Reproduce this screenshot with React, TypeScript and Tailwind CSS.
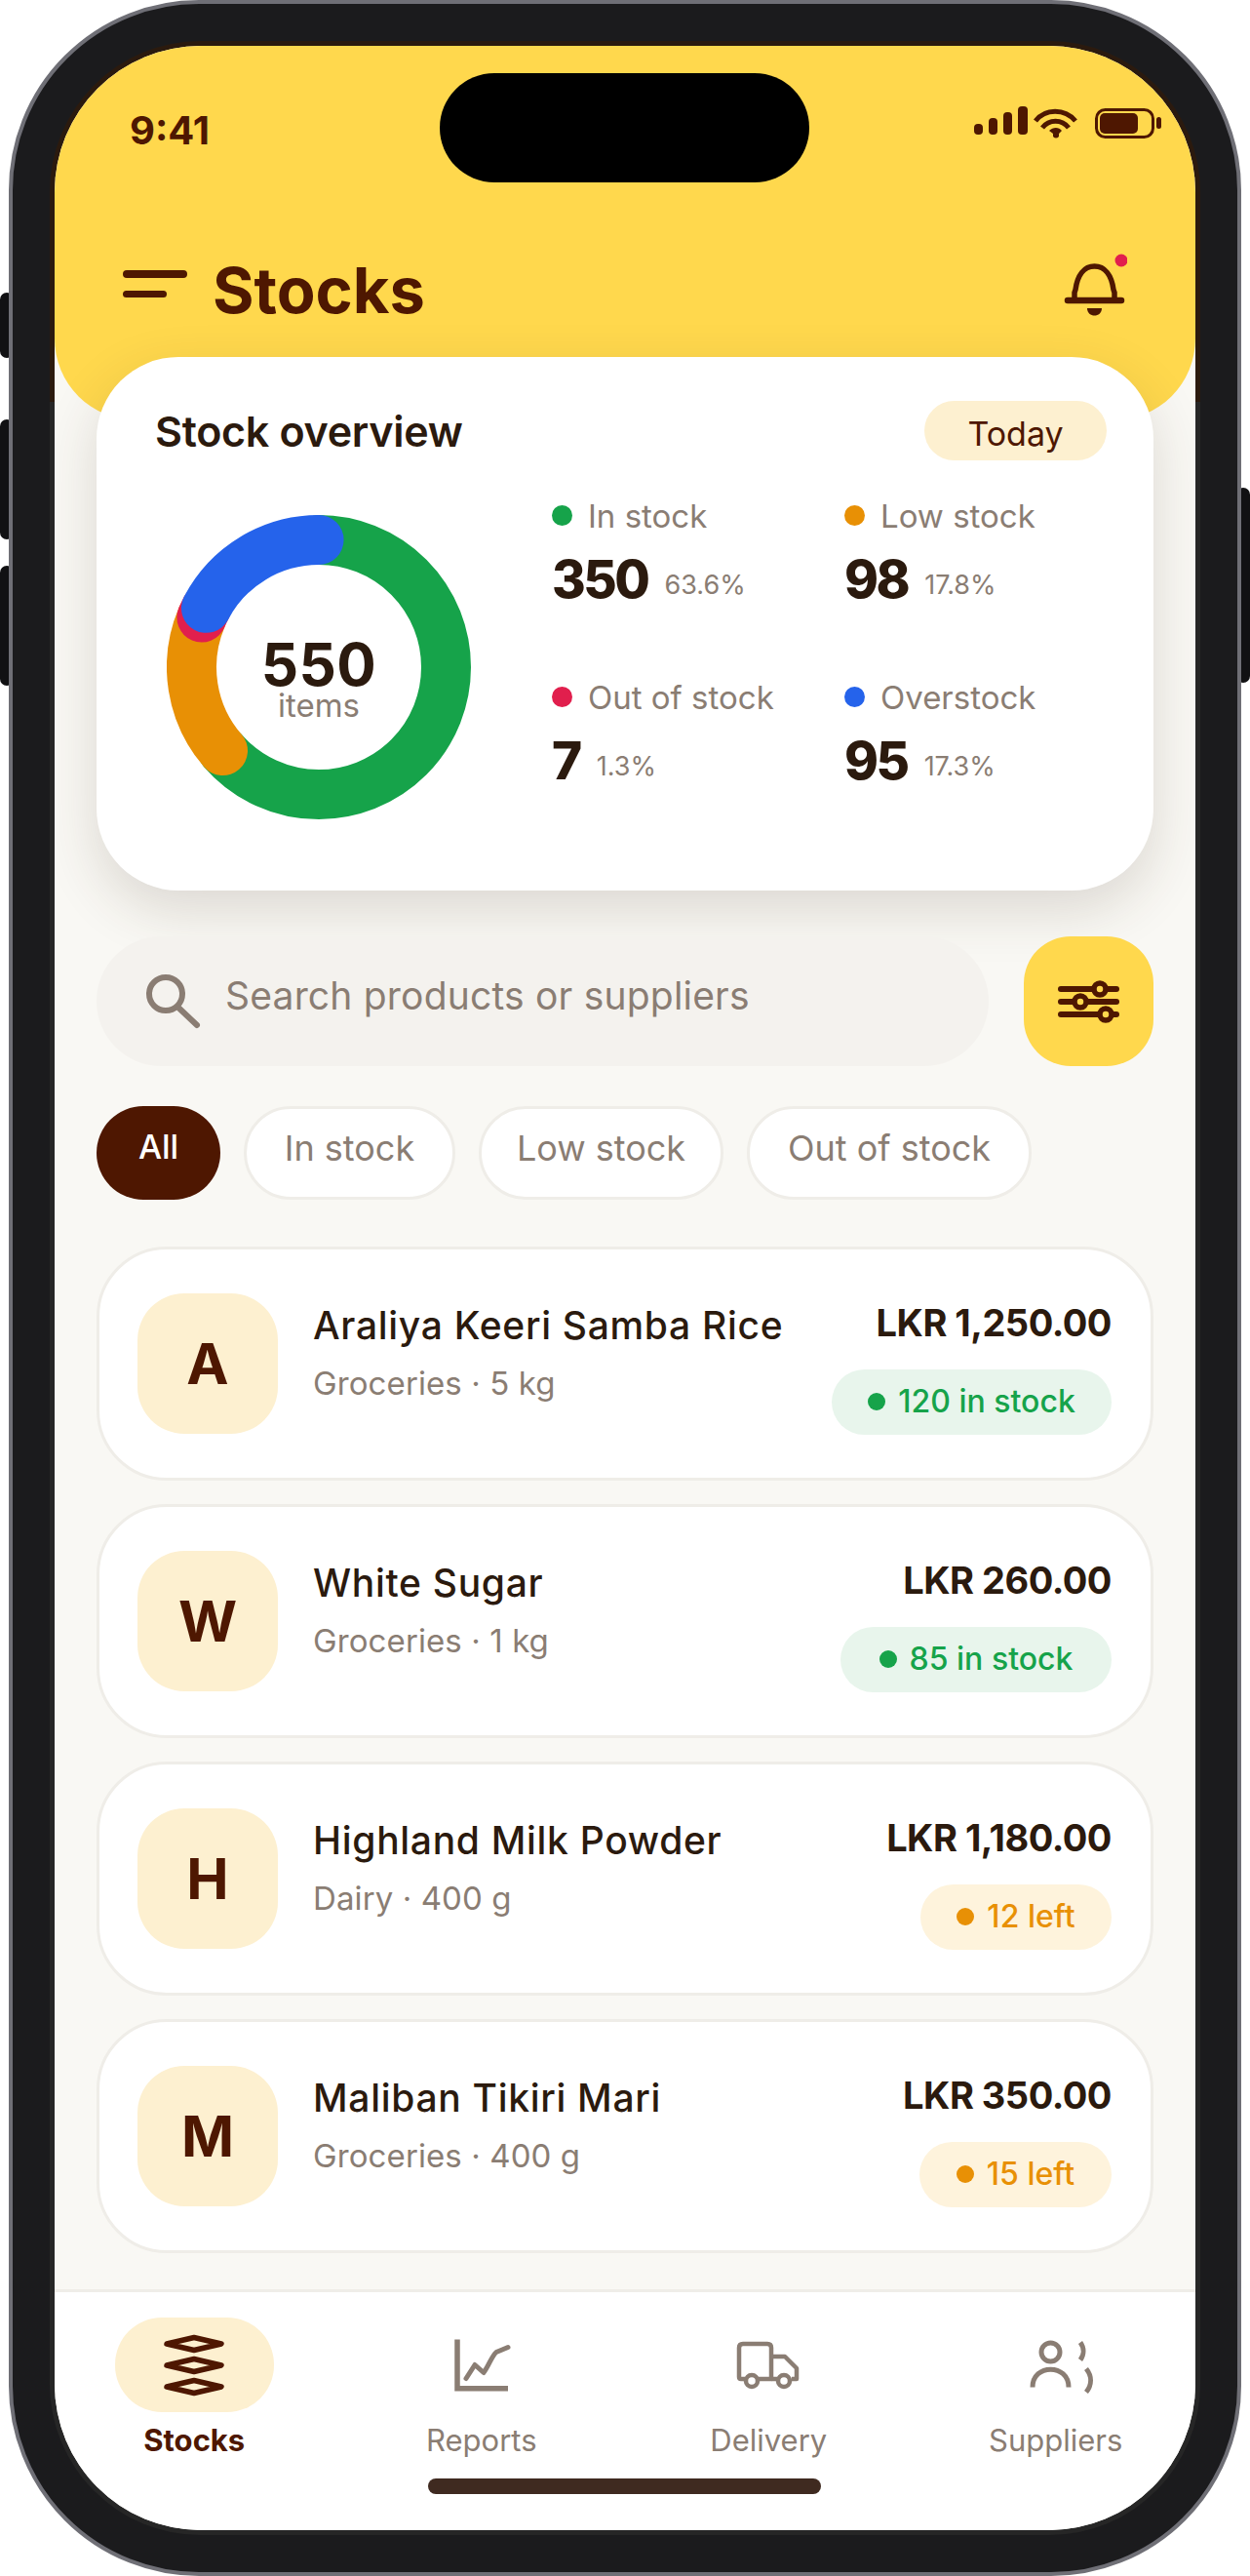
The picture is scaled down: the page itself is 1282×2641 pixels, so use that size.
import React from "react";

const stats = [
  { dot: "bg-[#16A34A]", label: "In stock", value: "350", pct: "63.6%" },
  { dot: "bg-[#E89005]", label: "Low stock", value: "98", pct: "17.8%" },
  { dot: "bg-[#E11F4D]", label: "Out of stock", value: "7", pct: "1.3%" },
  { dot: "bg-[#2563EB]", label: "Overstock", value: "95", pct: "17.3%" },
];

const chips = [
  { label: "In stock", w: "w-[217px]" },
  { label: "Low stock", w: "w-[251px]" },
  { label: "Out of stock", w: "w-[292px]" },
];

const items = [
  { l: "A", name: "Araliya Keeri Samba Rice", sub: "Groceries · 5 kg", price: "LKR 1,250.00", pill: "120 in stock", w: "w-[287px]", ok: true },
  { l: "W", name: "White Sugar", sub: "Groceries · 1 kg", price: "LKR 260.00", pill: "85 in stock", w: "w-[278px]", ok: true },
  { l: "H", name: "Highland Milk Powder", sub: "Dairy · 400 g", price: "LKR 1,180.00", pill: "12 left", w: "w-[196px]", ok: false },
  { l: "M", name: "Maliban Tikiri Mari", sub: "Groceries · 400 g", price: "LKR 350.00", pill: "15 left", w: "w-[197px]", ok: false },
];

const R = 130.5;
const C = 2 * Math.PI * R;
const seg = [
  { c: "#16A34A", from: 0, to: 229 },
  { c: "#E89005", from: 229, to: 293 },
  { c: "#E11F4D", from: 293, to: 297.7 },
  { c: "#2563EB", from: 297.7, to: 360 },
];

function Donut() {
  return (
    <div className="relative mt-[20px] ml-[72px] h-[312px] w-[312px] shrink-0">
      <svg width="312" height="312" viewBox="0 0 312 312" className="block">
        {seg.map((s) => (
          <circle
            key={s.c}
            cx="156"
            cy="156"
            r={R}
            fill="none"
            stroke={s.c}
            strokeWidth="51"
            strokeLinecap="round"
            strokeDasharray={`${((s.to - s.from) / 360) * C} ${C}`}
            transform={`rotate(${s.from - 90} 156 156)`}
          />
        ))}
      </svg>
      <div className="absolute inset-0 flex flex-col items-center justify-center pt-[31px]">
        <div className="text-[60px] leading-[44px] font-bold tracking-[0.5px] text-[#2B1A0E]">550</div>
        <div className="mt-[2px] text-[33px] leading-[36px] text-[#8A7D73]">items</div>
      </div>
    </div>
  );
}

function StatusIcons() {
  return (
    <svg width="200" height="40" viewBox="0 0 200 40" fill="#4E1701" className="block">
      <rect x="4" y="22" width="9" height="11" rx="4" />
      <rect x="19" y="16" width="9" height="17" rx="4" />
      <rect x="34" y="10" width="9" height="23" rx="4" />
      <rect x="49" y="4" width="10" height="29" rx="4" />
      <path d="M67 19 C77 6 97 6 108 19" fill="none" stroke="#4E1701" strokeWidth="5" />
      <path d="M74 26 C81 17 94 17 101 26" fill="none" stroke="#4E1701" strokeWidth="5" />
      <path d="M81 29 C85 25 91 25 94 29 L91 32 V35 Q88 38 85 35 V32 Z" />
      <rect x="129.5" y="7.5" width="58" height="28" rx="9" fill="none" stroke="#4E1701" strokeWidth="3" />
      <rect x="133" y="11" width="39" height="21" rx="5" />
      <rect x="191" y="15" width="5" height="12" rx="2.5" />
    </svg>
  );
}

function Bell() {
  return (
    <svg width="66" height="74" viewBox="0 0 66 74" className="block">
      <path d="M12 50 V42 L13 39 C15 24 22 15 32.5 15 C43 15 50 24 52 39 L53 42 V50" fill="none" stroke="#4E1701" strokeWidth="5.5" />
      <path d="M5 50 H60" stroke="#4E1701" strokeWidth="6.5" strokeLinecap="round" />
      <path d="M25 58 H40 C40 68 25 68 25 58 Z" fill="#4E1701" />
      <circle cx="60" cy="9" r="6.5" fill="#E11F4D" />
    </svg>
  );
}

function SearchIcon() {
  return (
    <svg width="56" height="56" viewBox="0 0 56 56" fill="none" stroke="#8A7D73" className="block shrink-0">
      <circle cx="20" cy="20" r="17" strokeWidth="6" />
      <path d="M33 34 L52 52" strokeWidth="6" strokeLinecap="round" />
    </svg>
  );
}

function FilterIcon() {
  return (
    <svg width="64" height="48" viewBox="0 0 64 48" fill="none" className="block">
      <g stroke="#4E1701" strokeWidth="6" strokeLinecap="round">
        <path d="M3 11 H60" />
        <path d="M3 24 H60" />
        <path d="M3 37 H60" />
      </g>
      <g fill="#FFD84D" stroke="#4E1701" strokeWidth="5.5">
        <circle cx="43" cy="11" r="6" />
        <circle cx="23" cy="24" r="6" />
        <circle cx="49" cy="37" r="6" />
      </g>
    </svg>
  );
}

function StocksNavIcon() {
  return (
    <svg width="64" height="66" viewBox="0 0 64 66" fill="none" stroke="#4E1701" strokeWidth="5.5" strokeLinejoin="round" className="block">
      <path d="M4 11 L32 4.5 L60 11 L32 17.5 Z" />
      <path d="M4 33 L32 26.5 L60 33 L32 39.5 Z" />
      <path d="M4 55 L32 48.5 L60 55 L32 61.5 Z" />
    </svg>
  );
}

function ReportsIcon() {
  return (
    <svg width="66" height="66" viewBox="0 0 66 66" fill="none" stroke="#8A7D73" className="block">
      <path d="M8 6.5 V56.8 H60" strokeWidth="5.5" />
      <path d="M17 46.5 L26 32.5 L35 40.5 C40 34 43 24 48 19.5 L60 14.5" strokeWidth="5" strokeLinecap="round" strokeLinejoin="round" />
    </svg>
  );
}

function TruckIcon() {
  return (
    <svg width="66" height="66" viewBox="0 0 66 66" fill="none" stroke="#8A7D73" strokeWidth="4.5" strokeLinejoin="round" className="block">
      <path d="M9 47 H5 Q3 47 3 45 V15 Q3 11 7 11 H32 Q36 11 36 15 V47 H22" />
      <path d="M36 24 H50 L62 36 V47 H57 M42 47 H36" />
      <circle cx="16" cy="49" r="6" />
      <circle cx="49" cy="49" r="6" />
    </svg>
  );
}

function SuppliersIcon() {
  return (
    <svg width="66" height="66" viewBox="0 0 66 66" fill="none" stroke="#8A7D73" strokeWidth="5" className="block overflow-visible">
      <circle cx="27.5" cy="19.5" r="9.5" />
      <path d="M9 55.5 C9 31 46 31 46 55.5" />
      <path d="M58 9.5 C62 15 62 22 58 27.5" />
      <path d="M64 36.5 C70 44 70 53 64 60.5" />
    </svg>
  );
}

const nav = [
  { label: "Reports", Icon: ReportsIcon },
  { label: "Delivery", Icon: TruckIcon },
  { label: "Suppliers", Icon: SuppliersIcon },
];

export default function App() {
  return (
    <div className="relative h-[2641px] w-[1282px] overflow-hidden bg-white pl-[9px] font-['Inter','Noto_Sans',sans-serif] text-[#2B1A0E]">
      <div className="absolute left-0 top-[300px] h-[67px] w-[14px] rounded-[7px] bg-[#111113]" />
      <div className="absolute left-0 top-[430px] h-[123px] w-[14px] rounded-[7px] bg-[#111113]" />
      <div className="absolute left-0 top-[580px] h-[123px] w-[14px] rounded-[7px] bg-[#111113]" />
      <div className="absolute right-0 top-[500px] h-[200px] w-[14px] rounded-[7px] bg-[#111113]" />

      <div className="relative h-[2641px] w-[1264px] rounded-[195px] border-[4px] border-[#6F6F76] bg-[#1B1B1D] p-[38px]">
        <div className="h-full rounded-[155px] bg-[linear-gradient(#2B1A0E_0,#2B1A0E_370px,#262626_370px)] p-[5px]">
          <div className="relative flex h-full flex-col overflow-hidden rounded-[150px] bg-[#F9F8F4]">
            <div className="absolute left-[395px] top-[28px] z-20 h-[112px] w-[379px] rounded-full bg-black" />

            <header className="h-[384px] shrink-0 rounded-b-[84px] bg-[#FFD84D] pt-[58px]">
              <div className="flex h-[40px] items-start justify-between pl-[77px] pr-[31px]">
                <div className="mt-[7px] text-[40px] leading-[44px] font-bold text-[#4E1701]">9:41</div>
                <StatusIcons />
              </div>
              <div className="mt-[113px] flex h-[74px] items-center justify-between pl-[70px] pr-[70px]">
                <div className="flex items-center gap-[26px]">
                  <div className="flex flex-col gap-[13px] pb-[8px]">
                    <div className="h-[8px] w-[66px] rounded-full bg-[#4E1701]" />
                    <div className="h-[7px] w-[45px] rounded-full bg-[#4E1701]" />
                  </div>
                  <h1 className="pt-[5px] text-[65px] leading-[74px] font-bold text-[#4E1701]">Stocks</h1>
                </div>
                <Bell />
              </div>
            </header>

            <main className="relative z-10 -mt-[65px] flex-1 px-[43px]">
              <section className="h-[547px] rounded-[84px] bg-white pt-[45px] shadow-[0_20px_56px_rgba(70,50,30,0.16)]">
                <div className="flex h-[61px] items-center justify-between pl-[60px] pr-[48px]">
                  <h2 className="text-[43px] leading-[50px] font-semibold tracking-[-0.3px] text-[#2B1A0E]">Stock overview</h2>
                  <div className="flex h-[61px] w-[187px] items-center justify-center rounded-full bg-[#FDF0D0] pt-[6px] text-[34px] leading-[40px] text-[#4E1701]">Today</div>
                </div>
                <div className="mt-[36px] flex items-start">
                  <Donut />
                  <div className="ml-[83px] grid grid-cols-[300px_auto] gap-y-[72px]">
                    {stats.map((s) => (
                      <div key={s.label}>
                        <div className="flex h-[40px] items-center gap-[16px]">
                          <span className={`h-[21px] w-[21px] rounded-full ${s.dot}`} />
                          <span className="pt-[2px] text-[33px] leading-[40px] text-[#8A7D73]">{s.label}</span>
                        </div>
                        <div className="mt-[14px] flex h-[60px] items-baseline gap-[17px]">
                          <span className="pt-[2px] text-[53px] leading-[60px] font-extrabold tracking-[-2.5px] text-[#2B1A0E]">{s.value}</span>
                          <span className="-translate-y-[4px] text-[27px] leading-[40px] text-[#8A7D73]">{s.pct}</span>
                        </div>
                      </div>
                    ))}
                  </div>
                </div>
              </section>

              <div className="mt-[47px] flex gap-[36px]">
                <div className="flex h-[133px] flex-1 items-center gap-[25px] rounded-full bg-[#F4F2EE] pl-[51px]">
                  <SearchIcon />
                  <span className="pb-[12px] text-[39px] leading-[50px] tracking-[0.2px] text-[#8A7D73]">Search products or suppliers</span>
                </div>
                <div className="flex h-[133px] w-[133px] items-center justify-center rounded-[48px] bg-[#FFD84D]">
                  <FilterIcon />
                </div>
              </div>

              <div className="mt-[41px] flex gap-[24px]">
                <div className="flex h-[96px] w-[127px] items-center justify-center rounded-[48px] bg-[#4E1701] pb-[12px] text-[34px] leading-[44px] font-medium text-white">All</div>
                {chips.map((c) => (
                  <div key={c.label} className={`flex h-[96px] items-center justify-center rounded-[48px] border-[3px] border-[#EFEDE8] bg-white pb-[10px] text-[36px] leading-[44px] text-[#8A7D73] ${c.w}`}>
                    {c.label}
                  </div>
                ))}
              </div>

              <div className="mt-[48px] flex flex-col gap-[24px]">
                {items.map((it) => (
                  <div key={it.l} className="flex h-[240px] items-center justify-between rounded-[72px] border-[3px] border-[#EFEDE8] bg-white pl-[39px] pr-[40px]">
                    <div className="flex items-center gap-[36px]">
                      <div className="flex h-[144px] w-[144px] items-center justify-center rounded-[48px] bg-[#FDF0D0] text-[58px] leading-[60px] font-bold text-[#4E1701]">{it.l}</div>
                      <div className="pb-[24px]">
                        <div className="text-[39px] leading-[60px] font-medium tracking-[0.7px] text-[#2B1A0E]">{it.name}</div>
                        <div className="mt-[4px] text-[33px] leading-[50px] tracking-[0.1px] text-[#8A7D73]">{it.sub}</div>
                      </div>
                    </div>
                    <div className="flex flex-col items-end pt-[5px]">
                      <div className="text-[38px] leading-[50px] font-bold tracking-[-0.5px] text-[#2B1A0E]">{it.price}</div>
                      <div className={`mt-[23px] flex h-[67px] items-center justify-center gap-[13px] rounded-full text-[32px] leading-[40px] font-medium ${it.w} ${it.ok ? "bg-[#E8F5EC] text-[#16A34A]" : "bg-[#FEF3DC] text-[#E89005]"}`}>
                        <span className={`h-[18px] w-[18px] rounded-full ${it.ok ? "bg-[#16A34A]" : "bg-[#E89005]"}`} />
                        {it.pill}
                      </div>
                    </div>
                  </div>
                ))}
              </div>
            </main>

            <nav className="relative h-[247px] shrink-0 border-t-[3px] border-[#EFEDE8] bg-white">
              <div className="-mx-[4px] grid grid-cols-4 pt-[26px]">
                <div className="flex flex-col items-center">
                  <div className="flex h-[97px] w-[163px] items-center justify-center rounded-[48px] bg-[#FDF0D0]">
                    <StocksNavIcon />
                  </div>
                  <div className="mt-[7px] text-[31px] leading-[44px] font-bold text-[#4E1701]">Stocks</div>
                </div>
                {nav.map(({ label, Icon }) => (
                  <div key={label} className="flex flex-col items-center">
                    <div className="flex h-[97px] items-center justify-center">
                      <Icon />
                    </div>
                    <div className="mt-[7px] text-[31px] leading-[44px] text-[#8A7D73]">{label}</div>
                  </div>
                ))}
              </div>
              <div className="absolute bottom-[37px] left-[383px] h-[16px] w-[403px] rounded-full bg-[#3F2A20]" />
            </nav>
          </div>
        </div>
      </div>
    </div>
  );
}
